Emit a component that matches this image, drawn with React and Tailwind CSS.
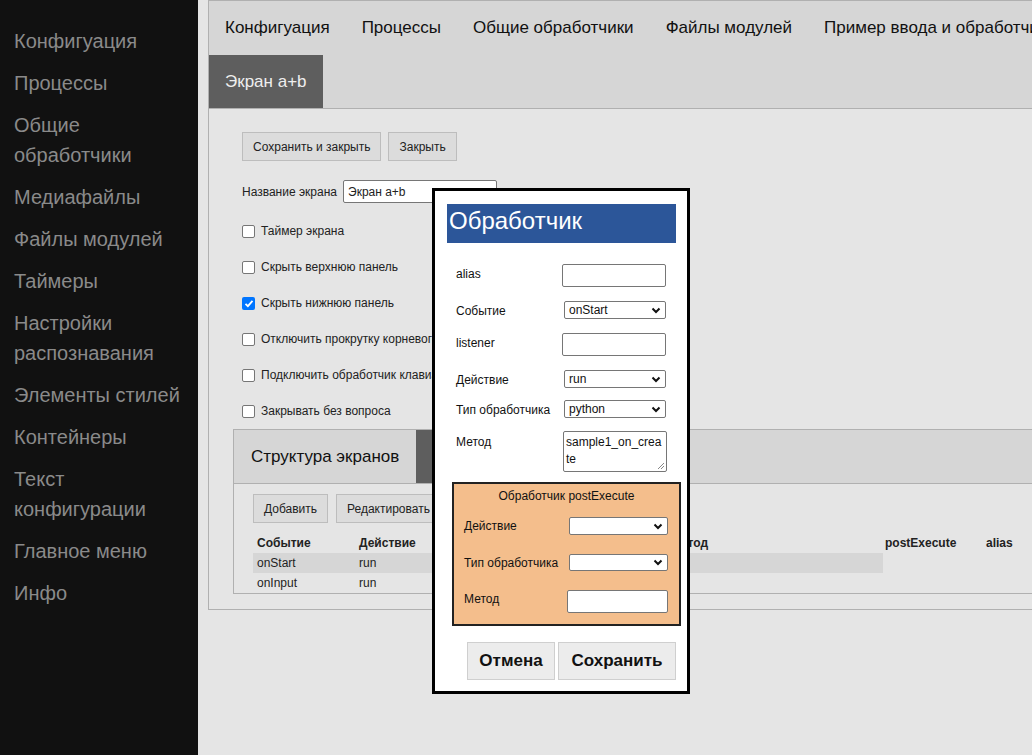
import React from 'react'

const font = { fontFamily: '"Liberation Sans", Arial, sans-serif' }

const sideItems = [
  ['Конфигуация'],
  ['Процессы'],
  ['Общие', 'обработчики'],
  ['Медиафайлы'],
  ['Файлы модулей'],
  ['Таймеры'],
  ['Настройки', 'распознавания'],
  ['Элементы стилей'],
  ['Контейнеры'],
  ['Текст', 'конфигурации'],
  ['Главное меню'],
  ['Инфо'],
]

const topTabs = ['Конфигуация', 'Процессы', 'Общие обработчики', 'Файлы модулей', 'Пример ввода и обработчиков']

const checks = [
  ['Таймер экрана', false],
  ['Скрыть верхнюю панель', false],
  ['Скрыть нижнюю панель', true],
  ['Отключить прокрутку корневого элемента', false],
  ['Подключить обработчик клавиатуры', false],
  ['Закрывать без вопроса', false],
]

function Chevron() {
  return (
    <svg width="10" height="7" viewBox="0 0 10 7" className="shrink-0">
      <path d="M1.5 1.5l3.5 3.5 3.5-3.5" fill="none" stroke="#111" strokeWidth="2" />
    </svg>
  )
}

function Select({ value, className }) {
  return (
    <div className={`flex items-center justify-between rounded-[2px] border border-[#767676] bg-white pl-[4px] pr-[4px] text-[12px] leading-none text-[#111] ${className}`}>
      <span>{value}</span>
      <Chevron />
    </div>
  )
}

function Checkbox({ checked }) {
  if (checked) {
    return (
      <div className="flex h-[13px] w-[13px] items-center justify-center rounded-[2px] bg-[#0075ff]">
        <svg width="10" height="9" viewBox="0 0 10 9">
          <path d="M1.5 4.8l2.4 2.4 4.6-5.4" fill="none" stroke="#fff" strokeWidth="1.8" />
        </svg>
      </div>
    )
  }
  return <div className="h-[13px] w-[13px] rounded-[2px] border border-[#767676] bg-white" />
}

function Btn({ children, className = '' }) {
  return (
    <div className={`flex h-[29px] items-center whitespace-nowrap border border-[#bdbdbd] bg-[#dcdcdc] px-[10px] text-[12px] text-[#222] ${className}`}>
      {children}
    </div>
  )
}

function HandlerModal() {
  return (
    <div className="absolute left-[432px] top-[188px] flex h-[506px] w-[258px] flex-col border-[3px] border-black bg-white text-[12px] text-[#111]">
      <div className="ml-[12px] mt-[13px] flex h-[39px] w-[229px] items-start bg-[#2c5699] pl-[2px] pt-[3px] text-[24px] leading-[28px] text-white">
        Обработчик
      </div>

      <div className="mt-[21px] flex flex-col pl-[21px]">
        <div className="flex h-[37px] items-start">
          <span className="w-[106px] pt-[1px]">alias</span>
          <div className="h-[23px] w-[104px] rounded-[2px] border border-[#767676] bg-white" />
        </div>
        <div className="flex h-[32px] items-start">
          <span className="w-[108px] pt-[1px]">Событие</span>
          <Select value="onStart" className="h-[18px] w-[102px]" />
        </div>
        <div className="flex h-[37px] items-start">
          <span className="w-[106px] pt-[1px]">listener</span>
          <div className="h-[23px] w-[104px] rounded-[2px] border border-[#767676] bg-white" />
        </div>
        <div className="flex h-[30px] items-start">
          <span className="w-[108px] pt-[1px]">Действие</span>
          <Select value="run" className="h-[18px] w-[102px]" />
        </div>
        <div className="flex h-[31px] items-start">
          <span className="w-[108px] pt-[1px]">Тип обработчика</span>
          <Select value="python" className="h-[18px] w-[102px]" />
        </div>
        <div className="flex items-start">
          <span className="w-[107px] pt-[2px]">Метод</span>
          <div className="relative h-[41px] w-[104px] rounded-[2px] border border-[#767676] bg-white pl-[2px] pt-[2px] text-[12px] leading-[17px]">
            sample1_on_crea
            <br />
            te
            <svg width="8" height="8" viewBox="0 0 8 8" className="absolute bottom-[1px] right-[1px]">
              <path d="M7 1L1 7M7 4L4 7" stroke="#888" strokeWidth="1" />
            </svg>
          </div>
        </div>
      </div>

      <div className="ml-[17px] mt-[10px] flex h-[144px] w-[229px] flex-col border-2 border-[#222] bg-[#f4be8c]">
        <div className="mt-[5px] text-center text-[12px] leading-[15px]">Обработчик postExecute</div>
        <div className="mt-[13px] flex h-[18px] items-center pl-[10px]">
          <span className="w-[105px]">Действие</span>
          <Select value="" className="h-[18px] w-[99px]" />
        </div>
        <div className="mt-[19px] flex h-[17px] items-center pl-[10px]">
          <span className="w-[105px]">Тип обработчика</span>
          <Select value="" className="h-[17px] w-[99px]" />
        </div>
        <div className="mt-[19px] flex items-start pl-[10px]">
          <span className="w-[103px]">Метод</span>
          <div className="h-[23px] w-[101px] rounded-[2px] border border-[#767676] bg-white" />
        </div>
      </div>

      <div className="ml-[32px] mt-[16px] flex gap-[3px]">
        <div className="flex h-[38px] w-[88px] items-center justify-center border border-[#cfcfcf] bg-[#ececec] text-[17px] font-bold">
          Отмена
        </div>
        <div className="flex h-[38px] w-[118px] items-center justify-center border border-[#cfcfcf] bg-[#ececec] text-[17px] font-bold">
          Сохранить
        </div>
      </div>
    </div>
  )
}

export default function App() {
  return (
    <div className="relative flex h-[755px] w-full overflow-hidden bg-[#e5e5e5]" style={font}>
      {/* Sidebar */}
      <aside className="flex w-[198px] shrink-0 flex-col gap-[12px] bg-[#111111] pl-[14px] pt-[26px] text-[20px] leading-[30px] text-[#8a8a8a]">
        {sideItems.map((lines) => (
          <div key={lines.join(' ')}>
            {lines.map((l) => (
              <div key={l}>{l}</div>
            ))}
          </div>
        ))}
      </aside>

      {/* Main */}
      <main className="flex-1 overflow-hidden pl-[10px]">
        <div className="w-[1200px] border border-[#b0b0b0] bg-[#e5e5e5] pb-[15px]">
          <div className="border-b border-[#b0b0b0] bg-[#d6d6d6] text-[17px] text-[#111]">
            <div className="flex h-[54px] items-center whitespace-nowrap">
              {topTabs.map((t) => (
                <div key={t} className="px-[16px]">{t}</div>
              ))}
            </div>
            <div className="flex h-[53px]">
              <div className="flex items-center bg-[#5e5e5e] px-[16px] text-[#eeeeee]">Экран a+b</div>
            </div>
          </div>

          <div className="flex flex-col pl-[24px] pr-[24px] pt-[23px] text-[12px] text-[#222]">
            <div className="ml-[9px] flex gap-[7px]">
              <Btn>Сохранить и закрыть</Btn>
              <Btn>Закрыть</Btn>
            </div>

            <div className="ml-[9px] mt-[19px] flex items-center">
              <span className="w-[101px] whitespace-nowrap">Название экрана</span>
              <div className="flex h-[23px] w-[154px] items-center rounded-[2px] border border-[#767676] bg-white pl-[4px]">
                Экран a+b
              </div>
            </div>

            <div className="ml-[9px] mt-[10px] flex flex-col">
              {checks.map(([label, on]) => (
                <div key={label} className="flex h-[36px] items-center gap-[6px] whitespace-nowrap">
                  <Checkbox checked={on} />
                  <span>{label}</span>
                </div>
              ))}
            </div>

            {/* Screen structure */}
            <div className="border border-[#b0b0b0]">
              <div className="flex h-[54px] border-b border-[#b0b0b0] bg-[#d6d6d6] text-[17px] text-[#111]">
                <div className="flex items-center px-[17px]">Структура экранов</div>
                <div className="flex items-center bg-[#5e5e5e] px-[17px] text-[#eeeeee]">Обработчики</div>
              </div>
              <div className="pl-[19px] pt-[10px]">
                <div className="flex gap-[8px]">
                  <Btn>Добавить</Btn>
                  <Btn>Редактировать</Btn>
                  <Btn>Удалить</Btn>
                </div>
                <table className="mt-[10px] border-collapse text-left text-[12px] leading-[20px]">
                  <thead>
                    <tr>
                      <th className="w-[102px] pl-[4px] font-bold">Событие</th>
                      <th className="w-[100px] pl-[4px] font-bold">Действие</th>
                      <th className="w-[212px] pl-[4px] font-bold">Тип обработчика</th>
                      <th className="w-[216px] pl-[4px] font-bold">Метод</th>
                      <th className="w-[99px] pl-[2px] font-bold">postExecute</th>
                      <th className="w-[80px] pl-[4px] font-bold">alias</th>
                    </tr>
                  </thead>
                  <tbody>
                    <tr>
                      <td className="bg-[#d6d6d6] pl-[4px]">onStart</td>
                      <td className="bg-[#d6d6d6] pl-[4px]">run</td>
                      <td className="bg-[#d6d6d6] pl-[4px]">python</td>
                      <td className="bg-[#d6d6d6] pl-[4px]" />
                      <td />
                      <td />
                    </tr>
                    <tr>
                      <td className="pl-[4px]">onInput</td>
                      <td className="pl-[4px]">run</td>
                      <td className="pl-[4px]">python</td>
                      <td className="pl-[4px]" />
                      <td />
                      <td />
                    </tr>
                  </tbody>
                </table>
              </div>
            </div>
          </div>
        </div>
      </main>

      <HandlerModal />
    </div>
  )
}
